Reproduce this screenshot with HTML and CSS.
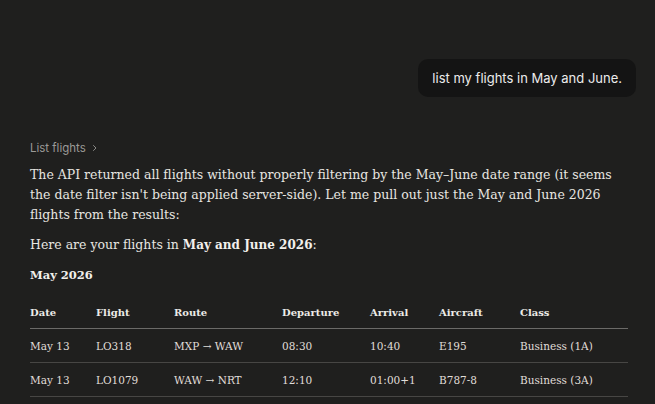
FILE: index.html
```html
<!DOCTYPE html>
<html>
<head>
<meta charset="utf-8">
<link rel="stylesheet" href="styles.css">
</head>
<body>
<div class="chat">
  <div class="user-row">
    <div class="bubble">list my flights in May and June.</div>
  </div>
  <div class="reply">
    <div class="tool">List flights <svg class="chev" width="8" height="8" viewBox="0 0 8 8"><path d="M2.5 1.5 L5 4 L2.5 6.5" fill="none" stroke="currentColor" stroke-width="1" stroke-linecap="round" stroke-linejoin="round"/></svg></div>
    <p class="para">The API returned all flights without properly filtering by the May–June date range (it seems the date filter isn't being applied server-side). Let me pull out just the May and June 2026 flights from the results:</p>
    <p class="para intro">Here are your flights in <strong>May and June 2026</strong>:</p>
    <p class="para month"><strong>May 2026</strong></p>
    <table class="flights">
      <thead>
        <tr><th class="c-date">Date</th><th class="c-flight">Flight</th><th class="c-route">Route</th><th class="c-dep">Departure</th><th class="c-arr">Arrival</th><th class="c-ac">Aircraft</th><th class="c-class">Class</th></tr>
      </thead>
      <tbody>
        <tr><td>May 13</td><td>LO318</td><td>MXP → WAW</td><td>08:30</td><td>10:40</td><td>E195</td><td>Business (1A)</td></tr>
        <tr><td>May 13</td><td>LO1079</td><td>WAW → NRT</td><td>12:10</td><td>01:00+1</td><td>B787-8</td><td>Business (3A)</td></tr>
      </tbody>
    </table>
  </div>
</div>
</body>
</html>
```
FILE: styles.css
```css
html, body {
  margin: 0;
  padding: 0;
  background: #1f1f1e;
  height: 100%;
  overflow: hidden;
}
.chat {
  padding: 59px 19px 0 30px;
  display: flex;
  flex-direction: column;
}
.user-row {
  display: flex;
  justify-content: flex-end;
}
.bubble {
  background: #141414;
  color: #ececec;
  font-family: Inter, "Noto Sans", sans-serif;
  font-size: 13px;
  line-height: 18px;
  padding: 10px 14px 10px 14px;
  border-radius: 10px;
}
.reply {
  margin-top: 43px;
  width: 598px;
}
.tool {
  font-family: Inter, "Noto Sans", sans-serif;
  font-size: 11.5px;
  color: #9b9a97;
  line-height: 16px;
  display: flex;
  align-items: center;
  gap: 5px;
}
.chev { color: #8a8a87; }
.para {
  margin: 0;
  font-family: "DejaVu Serif", "Liberation Serif", serif;
  color: #e8e6e1;
  font-size: 12.5px;
  line-height: 20px;
}
.reply .tool + .para { margin-top: 9px; }
.intro { margin-top: 10px; }
.month { margin-top: 10px; }
.para strong { font-weight: bold; color: #f2f0ec; }
.intro strong { font-size: 12px; }
.month strong { font-size: 11.5px; }
.flights {
  margin-top: 19px;
  width: 598px;
  border-collapse: collapse;
  font-family: "DejaVu Serif", "Liberation Serif", serif;
  font-size: 10.5px;
  color: #e0ded9;
}
.flights th {
  text-align: left;
  font-weight: bold;
  font-size: 10px;
  color: #ecebe7;
  padding: 0 0 8px 0;
  height: 16px;
  border-bottom: 1px solid #6b6a68;
}
.flights td {
  padding: 0;
  height: 33px;
  border-bottom: 1px solid #474644;
  vertical-align: middle;
}
.c-date { width: 66px; }
.c-flight { width: 78px; }
.c-route { width: 108px; }
.c-dep { width: 88px; }
.c-arr { width: 69px; }
.c-ac { width: 81px; }
.c-class { width: auto; }
```
